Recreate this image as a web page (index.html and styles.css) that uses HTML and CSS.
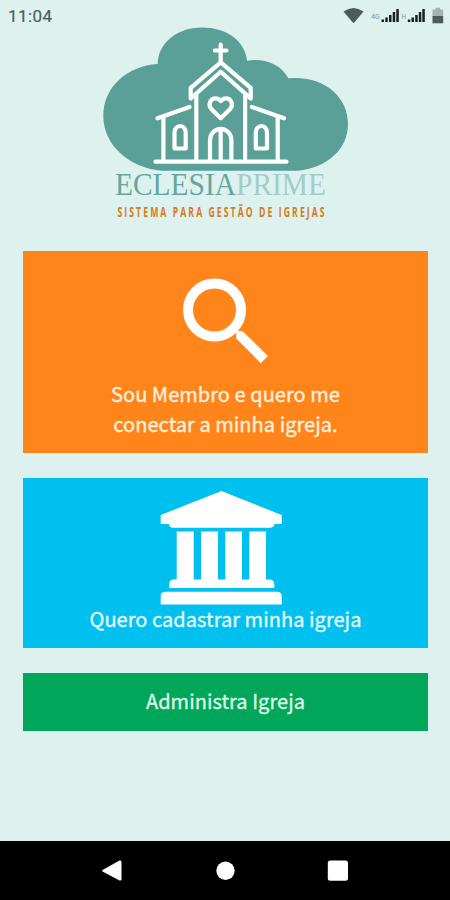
FILE: index.html
```html
<!DOCTYPE html>
<html lang="pt-BR">
<head>
<meta charset="utf-8">
<title>Eclesia Prime</title>
<link rel="stylesheet" href="styles.css">
</head>
<body>
<div class="screen">
  <header class="status">
    <span class="clock">11:04</span>
    <svg class="status-icons" width="106" height="20" viewBox="340 5 106 20">
      <path fill="#4d5c5a" d="M343.5 11.5Q353.500 4.500 363.500 11.500L354.500 22.300Q353.500 23.300 352.500 22.300Z"/>
      <text class="net" x="371" y="18.500" textLength="9" lengthAdjust="spacingAndGlyphs">4G</text>
      <path fill="#17211f" d="M381.500 19.500h2.500v2.500h-2.500zM385.300 17.500h2.500v4.500h-2.500zM389 15h2.500v7h-2.500zM392.700 12h2.500v10h-2.500zM396.300 9h2.500v13h-2.500z"/>
      <text class="net" x="401.500" y="18.500" textLength="4.500" lengthAdjust="spacingAndGlyphs">H</text>
      <path fill="#17211f" d="M407.800 19.500h2.500v2.500h-2.500zM411.500 17.500h2.500v4.500h-2.500zM415.200 15h2.500v7h-2.500zM418.800 12h2.500v10h-2.500zM422.300 9h2.500v13h-2.500z"/>
      <path fill="#a3b3b0" d="M432.500 9.500h3v-1.700h4.500v1.700h3.200v7h-10.700z"/>
      <path fill="#4d5c5a" d="M432.500 16h10.700v7.300h-10.700z"/>
    </svg>
  </header>

  <main class="content">
    <svg class="logo" width="260" height="200" viewBox="95 25 260 200">
      <path fill="#5ba097" d="M162 170.700C128 168 103.300 144 103.300 116C103.300 87 127 66 157.700 64C158 43 177 27.500 202 27.500C227 27.500 245 41 247 60.700C264 57.500 281 64 288.500 78.300C323 75 348 96 348 124C348 150 326 168 298 170.700Z"/>
      <g class="church">
        <path d="M220.700 44.500V62M214.800 50.500H226.500"/>
        <path d="M220.700 62.300L190.700 87.800V98.500L220.700 71.700L250.700 98.500V87.800Z"/>
        <path d="M196.300 95V161M245.100 95V161"/>
        <path d="M157.500 118.300L189.500 107M251.900 107L284 118.300"/>
        <path d="M163.400 117V161M277.700 117V161M155.500 161.700H286.500"/>
        <path d="M174.500 148.500V132.500A5.600 6.500 0 0 1 185.700 132.500V148.500ZM255.800 148.500V132.500A5.600 6.500 0 0 1 267 132.500V148.500Z"/>
        <path d="M210 161V140A10.700 11.200 0 0 1 231.400 140V161M220.700 129V161"/>
        <path d="M220.700 118.300L211.300 109C207.500 104.500 210.500 98.300 215.500 98.300C218 98.300 219.500 99.500 220.700 101C222 99.500 223.500 98.300 226 98.300C231 98.300 234 104.500 230.200 109Z"/>
      </g>
      <text class="brand" x="115" y="195" textLength="211" lengthAdjust="spacingAndGlyphs">ECLESIA<tspan class="light">PRIME</tspan></text>
      <g transform="translate(117.500 216.500) scale(.62 1)"><text class="tagline" textLength="334">SISTEMA PARA GESTÃO DE IGREJAS</text></g>
    </svg>

    <a class="card member">
      <svg class="search" width="90" height="90" viewBox="180 275 90 90">
        <circle cx="214.500" cy="310" r="26.500" fill="none" stroke="#fff" stroke-width="10"/>
        <path fill="#fff" d="M236.300 333.500Q236 331.500 238 330.800L243 331.500L267.800 356L260.800 363.200L236.300 338.500Z"/>
      </svg>
      <span>Sou Membro e quero me<br>conectar a minha igreja.</span>
    </a>
    <a class="card register">
      <svg class="temple" width="122" height="116" viewBox="160 490 122 116">
        <path fill="#fff" d="M221.500 491L281.700 515V524H274.500Q274 527.700 270 527.700H173Q169.300 527.700 169 524H160.700V515ZM176.700 531.500H193.700V579.500H201V531.500H218V579.500H225.300V531.500H242V579.500H249.300V531.500H266V579.500H270Q274.300 580 274.300 584V588H169.300V584Q169.300 580 173 579.500H176.700ZM165 591.700H277.500Q281.700 592 281.700 596V604.500H160.700V596Q160.700 592 165 591.700Z"/>
      </svg>
      <span>Quero cadastrar minha igreja</span>
    </a>
    <a class="card admin"><span>Administra Igreja</span></a>
  </main>

  <nav class="navbar">
    <svg width="22" height="22" viewBox="0 0 22 22"><path fill="#fff" d="M1.500 10L18.500.500Q20.500 0 20.500 2V19Q20.500 21 18.500 20.500L1.500 11.500Q.700 10.800 1.500 10Z"/></svg>
    <svg width="22" height="22" viewBox="0 0 22 22"><circle cx="11.500" cy="10.800" r="9.200" fill="#fff"/></svg>
    <svg width="22" height="22" viewBox="0 0 22 22"><rect x=".800" y=".600" width="20.200" height="20.200" rx="2.500" fill="#fff"/></svg>
  </nav>
</div>
</body>
</html>
```
FILE: styles.css
```css
* { box-sizing: border-box; }

body { margin: 0; }

.screen {
  display: flex;
  flex-direction: column;
  width: 450px;
  height: 900px;
  background: #ddf2ef;
  font-family: "Noto Sans CJK JP", "Noto Sans", sans-serif;
}

.status {
  display: flex;
  justify-content: space-between;
  height: 25px;
  padding: 5px 4px 0 8px;
}

.clock {
  font: 400 17px/22px Roboto, sans-serif;
  letter-spacing: .4px;
  color: #4d5c5a;
  -webkit-text-stroke: .2px #4d5c5a;
}

.net {
  font: 8px Roboto, sans-serif;
  fill: #82918e;
}

.content {
  display: flex;
  flex: 1;
  flex-direction: column;
  padding: 0 22px 0 23px;
}

.logo {
  flex: none;
  margin: 0 0 26px 72px;
}

.church {
  fill: none;
  stroke: #fff;
  stroke-width: 4.2;
  stroke-linecap: round;
  stroke-linejoin: round;
}

.brand {
  font: 32px "Liberation Serif", serif;
  fill: #66a69e;
}

.brand .light { fill: #a2cdc8; }

.tagline {
  font: bold 14px "Open Sans", sans-serif;
  fill: #d57b1c;
}

.card {
  display: flex;
  flex: none;
  flex-direction: column;
  align-items: center;
  font-size: 20px;
  line-height: 30px;
  letter-spacing: .05px;
  text-align: center;
  white-space: nowrap;
  -webkit-text-stroke: .35px currentColor;
}

.member {
  height: 202px;
  padding-top: 24px;
  margin-bottom: 25px;
  background: #ff851b;
  color: #fff0df;
}

.search { margin: 0 2px 14px 0; }

.register {
  height: 170px;
  padding-top: 12px;
  margin-bottom: 25px;
  background: #00c0ef;
  color: #e3f9ff;
}

.temple { margin-right: 10px; }

.register span { margin-top: -2px; }

.admin {
  height: 58px;
  padding-top: 13px;
  background: #00a65a;
  color: #def6e6;
}

.navbar {
  display: flex;
  justify-content: center;
  gap: 91px;
  height: 59px;
  padding-top: 19px;
  background: #000;
}
```
